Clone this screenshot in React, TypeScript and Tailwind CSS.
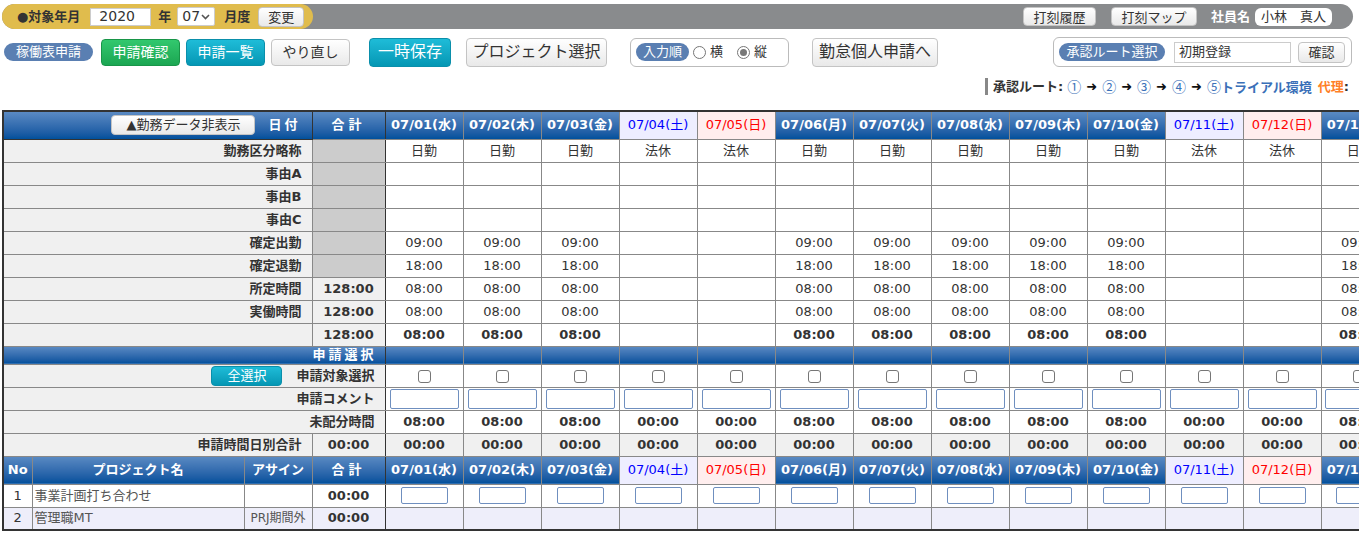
import React from "react";

type Day = { md: string; wd: string; kind: "work" | "sat" | "sun" };

const days: Day[] = [
  { md: "07/01", wd: "水", kind: "work" },
  { md: "07/02", wd: "木", kind: "work" },
  { md: "07/03", wd: "金", kind: "work" },
  { md: "07/04", wd: "土", kind: "sat" },
  { md: "07/05", wd: "日", kind: "sun" },
  { md: "07/06", wd: "月", kind: "work" },
  { md: "07/07", wd: "火", kind: "work" },
  { md: "07/08", wd: "水", kind: "work" },
  { md: "07/09", wd: "木", kind: "work" },
  { md: "07/10", wd: "金", kind: "work" },
  { md: "07/11", wd: "土", kind: "sat" },
  { md: "07/12", wd: "日", kind: "sun" },
  { md: "07/13", wd: "月", kind: "work" },
];

const blue = "bg-linear-to-b from-[#5a8ac3] to-[#00509c] text-white font-bold";
const td = "border border-[#888] p-0 h-[23px] text-center";
const label = "border border-[#888] p-0 h-[23px] bg-[#f0f0f0] text-right pr-[10px] font-bold";
const gray = "border border-[#888] border-r-[#333] p-0 h-[23px] bg-[#cccccc]";
const sum = "border border-[#888] border-r-[#333] p-0 h-[23px] bg-[#f0f0f0] text-center font-bold";
const whiteBtn =
  "rounded-[4px] border border-[#c4c4c4] bg-linear-to-b from-white to-[#e9e9e9] text-[#333]";
const cyanBtn =
  "rounded-[4px] border border-[#0a8fab] bg-linear-to-b from-[#1ebcd8] to-[#0497b4] text-white";
const cjk = "font-['Noto_Sans_CJK_JP',sans-serif]";

const DayHead = ({ d }: { d: Day }) => {
  const cls =
    d.kind === "sat"
      ? "bg-[#eeeeff] text-[#0000ff] font-normal"
      : d.kind === "sun"
      ? "bg-[#ffeeee] text-[#ff0000] font-normal"
      : blue;
  return (
    <td className={`border border-[#888] p-0 h-[28px] text-center text-[13px] ${cls}`}>
      {d.md}({d.wd})
    </td>
  );
};

const Pill = ({ w, children }: { w: string; children: React.ReactNode }) => (
  <span
    className={`flex h-[18px] ${w} items-center justify-center rounded-full bg-[#5a7fb2] text-[13px] text-white`}
  >
    {children}
  </span>
);

export default function App() {
  const work = (d: Day) => d.kind === "work";
  return (
    <div className="min-h-screen w-[1359px] overflow-hidden bg-white font-['DejaVu_Sans','Noto_Sans_CJK_JP',sans-serif] text-[13px] text-[#333]">
      {/* top bar */}
      <div className="px-[2px] pt-[4px]">
        <div className="flex h-[25px] w-[1351px] items-center rounded-full bg-[#898b8d]">
          <div className="flex h-full w-[311px] items-center rounded-full bg-[#e0bc4d] pl-[15px] font-bold">
            <span>●対象年月</span>
            <span className="ml-[10px] flex h-[18px] w-[61px] items-center border border-[#ccc] bg-white pl-[8px] text-[14px] font-normal">
              2020
            </span>
            <span className="ml-[7px]">年</span>
            <span className="ml-[6px] flex h-[19px] w-[38px] items-center justify-between rounded-[2px] border border-[#ccc] bg-white pl-[4px] pr-[4px] text-[14px] font-normal">
              07
              <svg width="9" height="6" viewBox="0 0 9 6">
                <path d="M1 1l3.5 3.5L8 1" fill="none" stroke="#555" strokeWidth="1.6" />
              </svg>
            </span>
            <span className="ml-[9px]">月度</span>
            <button className={`ml-[8px] h-[20px] w-[46px] font-normal ${whiteBtn}`}>変更</button>
          </div>
          <div className="ml-auto flex items-center pr-[21px]">
            <button className={`h-[19px] w-[73px] ${whiteBtn}`}>打刻履歴</button>
            <button className={`ml-[15px] h-[19px] w-[86px] ${whiteBtn}`}>打刻マップ</button>
            <span className="ml-[14px] font-bold text-white">社員名</span>
            <span className="ml-[5px] flex h-[18px] w-[77px] items-center justify-center rounded-[6px] bg-white">
              小林　真人
            </span>
          </div>
        </div>
      </div>

      {/* action row */}
      <div className="mt-[8px] flex h-[30px] items-center">
        <span className="ml-[4px]">
          <Pill w="w-[89px]">稼働表申請</Pill>
        </span>
        <button className="ml-[8px] h-[27px] w-[79px] rounded-[4px] border border-[#189548] bg-linear-to-b from-[#32c86e] to-[#1ba652] text-[14px] text-white">
          申請確認
        </button>
        <button className={`ml-[6px] h-[27px] w-[79px] text-[14px] ${cyanBtn}`}>申請一覧</button>
        <button className={`ml-[6px] h-[27px] w-[79px] text-[14px] ${whiteBtn}`}>やり直し</button>
        <button className={`ml-[19px] h-[29px] w-[82px] text-[16px] ${cyanBtn}`}>一時保存</button>
        <button className={`ml-[15px] h-[29px] w-[141px] text-[16px] ${whiteBtn}`}>プロジェクト選択</button>
        <div className="ml-[23px] flex h-[29px] w-[159px] items-center rounded-[6px] border border-[#bbb] pl-[5px]">
          <Pill w="w-[53px]">入力順</Pill>
          <span className="ml-[4px] h-[13px] w-[13px] rounded-full border border-[#767676] bg-white" />
          <span className="ml-[4px]">横</span>
          <span className="ml-[14px] flex h-[13px] w-[13px] items-center justify-center rounded-full border border-[#767676] bg-white">
            <span className="h-[7px] w-[7px] rounded-full bg-[#777]" />
          </span>
          <span className="ml-[4px]">縦</span>
        </div>
        <button className={`ml-[23px] h-[29px] w-[126px] text-[16px] ${whiteBtn}`}>勤怠個人申請へ</button>
        <div className="ml-[115px] flex h-[30px] w-[299px] items-center rounded-[6px] border border-[#bbb] pl-[5px]">
          <Pill w="w-[106px]">承認ルート選択</Pill>
          <span className="ml-[9px] flex h-[21px] w-[117px] items-center border border-[#ccc] bg-white pl-[4px]">
            初期登録
          </span>
          <button className={`ml-[7px] h-[21px] w-[47px] ${whiteBtn}`}>確認</button>
        </div>
      </div>

      {/* approval route */}
      <div className="mt-[11px] flex h-[17px] items-center justify-end pr-[10px]">
        <span className="h-[17px] w-[3px] bg-[#888]" />
        <span className="ml-[5px] font-bold">承認ルート:</span>
        <span className="ml-[4px] flex items-center gap-[5px] text-[#3a70b8]">
          <span className={`${cjk} text-[14px]`}>①</span>
          <span className="text-[#111]">➜</span>
          <span className={`${cjk} text-[14px]`}>②</span>
          <span className="text-[#111]">➜</span>
          <span className={`${cjk} text-[14px]`}>③</span>
          <span className="text-[#111]">➜</span>
          <span className={`${cjk} text-[14px]`}>④</span>
          <span className="text-[#111]">➜</span>
          <span className="font-bold">
            <span className={`${cjk} text-[14px] font-normal`}>⑤</span>トライアル環境
          </span>
        </span>
        <span className="ml-[6px] font-bold text-[#ff7f27]">代理</span>
        <span className="font-bold">:</span>
      </div>

      {/* main table */}
      <div className="ml-[2px] mt-[15px]">
        <table
          className="table-fixed border-collapse border-2 border-[#333] leading-[16px]"
          style={{ width: 309 + 73 + 78 * days.length }}
        >
          <colgroup>
            <col className="w-[29px]" />
            <col className="w-[212px]" />
            <col className="w-[68px]" />
            <col className="w-[73px]" />
            {days.map((d) => (
              <col key={d.md} className="w-[78px]" />
            ))}
          </colgroup>
          <tbody>
            <tr>
              <td colSpan={3} className={`h-[28px] border border-[#333] p-0 pr-[11px] text-right ${blue}`}>
                <button className={`h-[20px] w-[144px] align-middle text-[13px] font-normal ${whiteBtn}`}>
                  ▲勤務データ非表示
                </button>
                <span className="ml-[13px] align-middle tracking-[3px]">日付</span>
              </td>
              <td className={`h-[28px] border border-[#888] border-r-[#333] p-0 text-center tracking-[4px] ${blue}`}>合計</td>
              {days.map((d) => (
                <DayHead key={d.md} d={d} />
              ))}
            </tr>
            <tr>
              <td colSpan={3} className={label}>勤務区分略称</td>
              <td className={gray} />
              {days.map((d) => (
                <td key={d.md} className={td}>{work(d) ? "日勤" : "法休"}</td>
              ))}
            </tr>
            {["事由A", "事由B", "事由C"].map((r) => (
              <tr key={r}>
                <td colSpan={3} className={label}>{r}</td>
                <td className={gray} />
                {days.map((d) => (
                  <td key={d.md} className={td} />
                ))}
              </tr>
            ))}
            <tr>
              <td colSpan={3} className={label}>確定出勤</td>
              <td className={gray} />
              {days.map((d) => (
                <td key={d.md} className={td}>{work(d) ? "09:00" : ""}</td>
              ))}
            </tr>
            <tr>
              <td colSpan={3} className={label}>確定退勤</td>
              <td className={gray} />
              {days.map((d) => (
                <td key={d.md} className={td}>{work(d) ? "18:00" : ""}</td>
              ))}
            </tr>
            {["所定時間", "実働時間", ""].map((r, i) => (
              <tr key={r || "total"}>
                <td colSpan={3} className={label}>{r}</td>
                <td className={sum}>128:00</td>
                {days.map((d) => (
                  <td key={d.md} className={`${td} ${i === 2 ? "font-bold" : ""}`}>{work(d) ? "08:00" : ""}</td>
                ))}
              </tr>
            ))}
            <tr>
              <td colSpan={4} className={`h-[18px] border border-[#888] border-r-[#333] p-0 pr-[8px] text-right tracking-[3px] ${blue}`}>
                申請選択
              </td>
              {days.map((d) => (
                <td key={d.md} className={`h-[18px] border border-[#888] p-0 ${blue}`} />
              ))}
            </tr>
            <tr>
              <td colSpan={4} className={`${label} border-r-[#333]`}>
                <button className={`mr-[14px] h-[20px] w-[71px] align-middle text-[13px] font-normal leading-none ${cyanBtn}`}>全選択</button>
                <span className="align-middle">申請対象選択</span>
              </td>
              {days.map((d) => (
                <td key={d.md} className={td}>
                  <span className="inline-block h-[13px] w-[13px] rounded-[3px] border border-[#767676] bg-white align-middle" />
                </td>
              ))}
            </tr>
            <tr>
              <td colSpan={4} className={`${label} border-r-[#333]`}>申請コメント</td>
              {days.map((d) => (
                <td key={d.md} className={td}>
                  <span className="inline-block h-[20px] w-[69px] rounded-[2px] border border-[#6f8fbf] bg-white align-middle" />
                </td>
              ))}
            </tr>
            <tr>
              <td colSpan={4} className={`${label} border-r-[#333]`}>未配分時間</td>
              {days.map((d) => (
                <td key={d.md} className={`${td} font-bold`}>{work(d) ? "08:00" : "00:00"}</td>
              ))}
            </tr>
            <tr>
              <td colSpan={3} className={label}>申請時間日別合計</td>
              <td className={sum}>00:00</td>
              {days.map((d) => (
                <td key={d.md} className={`${td} bg-[#f0f0f0] font-bold`}>00:00</td>
              ))}
            </tr>
            <tr>
              <td className={`h-[28px] border border-[#888] p-0 text-center ${blue}`}>No</td>
              <td className={`h-[28px] border border-[#888] p-0 text-center ${blue}`}>プロジェクト名</td>
              <td className={`h-[28px] border border-[#888] p-0 text-center ${blue}`}>アサイン</td>
              <td className={`h-[28px] border border-[#888] border-r-[#333] p-0 text-center tracking-[4px] ${blue}`}>合計</td>
              {days.map((d) => (
                <DayHead key={d.md} d={d} />
              ))}
            </tr>
            <tr>
              <td className={td}>1</td>
              <td className={`${td} pl-[2px] text-left text-[#555]`}>事業計画打ち合わせ</td>
              <td className={td} />
              <td className={`${td} border-r-[#333] font-bold`}>00:00</td>
              {days.map((d) => (
                <td key={d.md} className={td}>
                  <span className="inline-block h-[17px] w-[47px] rounded-[2px] border border-[#6f8fbf] bg-white align-middle" />
                </td>
              ))}
            </tr>
            <tr className="bg-[#eeeefa]">
              <td className={td}>2</td>
              <td className={`${td} pl-[2px] text-left text-[#555]`}>管理職MT</td>
              <td className={`${td} text-[12px] text-[#555]`}>PRJ期間外</td>
              <td className={`${td} border-r-[#333] font-bold`}>00:00</td>
              {days.map((d) => (
                <td key={d.md} className={td} />
              ))}
            </tr>
          </tbody>
        </table>
      </div>
    </div>
  );
}
